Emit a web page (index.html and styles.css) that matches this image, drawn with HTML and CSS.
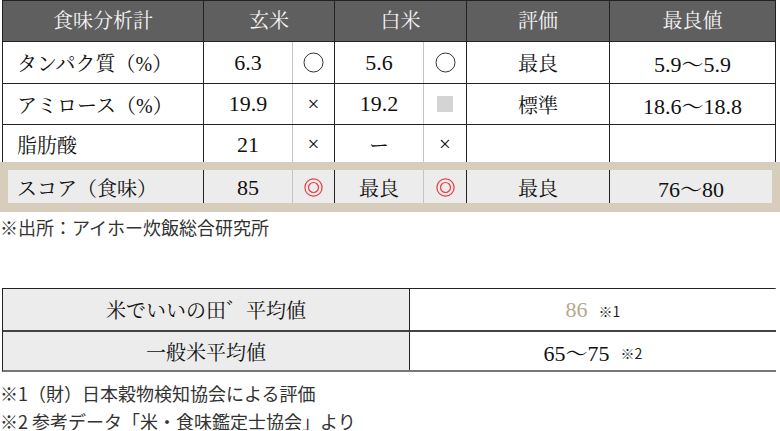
FILE: index.html
```html
<!DOCTYPE html>
<html lang="ja">
<head>
<meta charset="utf-8">
<title>食味分析計</title>
<link rel="stylesheet" href="styles.css">
</head>
<body>
<div class="page">
  <div class="analysis">
    <div class="head">
      <div class="hcell">食味分析計</div>
      <div class="hcell">玄米</div>
      <div class="hcell">白米</div>
      <div class="hcell">評価</div>
      <div class="hcell">最良値</div>
    </div>
    <div class="row r1">
      <div class="cell label">タンパク質（%）</div>
      <div class="cell num">6.3</div>
      <div class="cell mark"><svg width="21" height="21" viewBox="0 0 21 21"><circle cx="10.5" cy="10.5" r="9.5" fill="none" stroke="#333" stroke-width="1"/></svg></div>
      <div class="cell num">5.6</div>
      <div class="cell mark"><svg width="21" height="21" viewBox="0 0 21 21"><circle cx="10.5" cy="10.5" r="9.5" fill="none" stroke="#333" stroke-width="1"/></svg></div>
      <div class="cell">最良</div>
      <div class="cell num">5.9〜5.9</div>
    </div>
    <div class="row r2">
      <div class="cell label">アミロース（%）</div>
      <div class="cell num">19.9</div>
      <div class="cell mark x">×</div>
      <div class="cell num">19.2</div>
      <div class="cell mark"><span class="square"></span></div>
      <div class="cell">標準</div>
      <div class="cell num">18.6〜18.8</div>
    </div>
    <div class="row r3">
      <div class="cell label">脂肪酸</div>
      <div class="cell num">21</div>
      <div class="cell mark x">×</div>
      <div class="cell">ー</div>
      <div class="cell mark x">×</div>
      <div class="cell"></div>
      <div class="cell"></div>
    </div>
  </div>
  <div class="score">
    <div class="row srow">
      <div class="cell label">スコア（食味）</div>
      <div class="cell num">85</div>
      <div class="cell mark"><svg width="19" height="19" viewBox="0 0 19 19"><circle cx="9.5" cy="9.5" r="8.6" fill="none" stroke="#ea3b40" stroke-width="1.2"/><circle cx="9.5" cy="9.5" r="5" fill="none" stroke="#ea3b40" stroke-width="1.2"/></svg></div>
      <div class="cell">最良</div>
      <div class="cell mark"><svg width="19" height="19" viewBox="0 0 19 19"><circle cx="9.5" cy="9.5" r="8.6" fill="none" stroke="#ea3b40" stroke-width="1.2"/><circle cx="9.5" cy="9.5" r="5" fill="none" stroke="#ea3b40" stroke-width="1.2"/></svg></div>
      <div class="cell">最良</div>
      <div class="cell num">76〜80</div>
    </div>
  </div>
  <p class="note source">※出所：アイホー炊飯総合研究所</p>
  <div class="compare">
    <div class="ccell title">米でいいの田゛平均値</div>
    <div class="ccell value"><span class="num gold">86</span><span class="ref">※1</span></div>
    <div class="ccell title last">一般米平均値</div>
    <div class="ccell value last"><span class="num">65〜75</span><span class="ref">※2</span></div>
  </div>
  <div class="notes">
    <p class="note">※1（財）日本穀物検知協会による評価</p>
    <p class="note">※2 参考データ「米・食味鑑定士協会」より</p>
  </div>
</div>
</body>
</html>
```
FILE: styles.css
```css
* { box-sizing: border-box; }
html, body { margin: 0; padding: 0; background: #fff; }
body {
  width: 780px;
  font-family: "Liberation Serif", "Noto Serif CJK JP", "Noto Sans CJK JP", serif;
  color: #111;
}
.page { display: flex; flex-direction: column; }

.analysis {
  margin-left: 2px;
  width: 774px;
  border-left: 1px solid #222;
  border-right: 1px solid #222;
  display: flex;
  flex-direction: column;
}
.head {
  display: grid;
  grid-template-columns: 200px 131px 132px 143px 166px;
  height: 42px;
  background: #5f5f5f;
  border-top: 1px solid #222;
  border-bottom: 1px solid #222;
}
.hcell {
  color: #f4f4f4;
  font-size: 20px;
  line-height: 40px;
  text-align: center;
}
.hcell + .hcell { border-left: 1px solid #222; }

.row {
  display: grid;
  grid-template-columns: 200px 89px 42px 89px 43px 143px 166px;
}
.r1 { height: 42px; border-bottom: 1px solid #222; }
.r2 { height: 41px; border-bottom: 1px solid #222; }
.r3 { height: 37px; }
.cell {
  display: flex;
  align-items: center;
  justify-content: center;
  font-size: 20px;
  border-left: 1px solid #222;
}
.cell:first-child { border-left: 0; }
.cell.mark { border-left-color: #c4c4c4; }
.cell.label { justify-content: flex-start; padding-left: 14px; }
.r3 .cell { padding-top: 2px; }
.num { font-size: 22px; }
.cell.x { font-size: 21px; }
.square { width: 16px; height: 16px; background: #d4d4d4; }

.score {
  width: 780px;
  padding: 8px 8px 9px;
  background: #d7cdbc;
}
.srow {
  grid-template-columns: 195px 89px 42px 89px 43px 143px 163px;
  height: 33px;
  background: #ececec;
}
.srow .cell.label { padding-left: 9px; }
.srow .cell { padding-top: 2px; }

.note {
  margin: 0;
  font-family: "Noto Sans CJK JP", sans-serif;
  font-size: 18px;
  color: #333;
  line-height: 29px;
}
.source { margin-top: 1px; }

.compare {
  margin-top: 46px;
  margin-left: 2px;
  width: 774px;
  display: grid;
  grid-template-columns: 407px 366px;
  grid-template-rows: 43px 38px;
  border-top: 1px solid #222;
  border-left: 1px solid #222;
  border-right: 2px solid #777;
  border-bottom: 2px solid #777;
}
.ccell {
  display: flex;
  align-items: center;
  justify-content: center;
  font-size: 20px;
  border-bottom: 2px solid #444;
}
.ccell.last { border-bottom: 0; }
.title { background: #ececec; border-right: 1px solid #222; }
.value { background: #fff; }
.value .num { font-size: 22px; }
.gold { color: #b8a88a; }
.ref {
  font-family: "Noto Sans CJK JP", sans-serif;
  font-size: 14px;
  margin-left: 11px;
  color: #222;
  padding-top: 3px;
}

.notes {
  margin-top: 12px;
  display: flex;
  flex-direction: column;
  gap: 10px;
}
.notes .note { line-height: 18px; }
```
